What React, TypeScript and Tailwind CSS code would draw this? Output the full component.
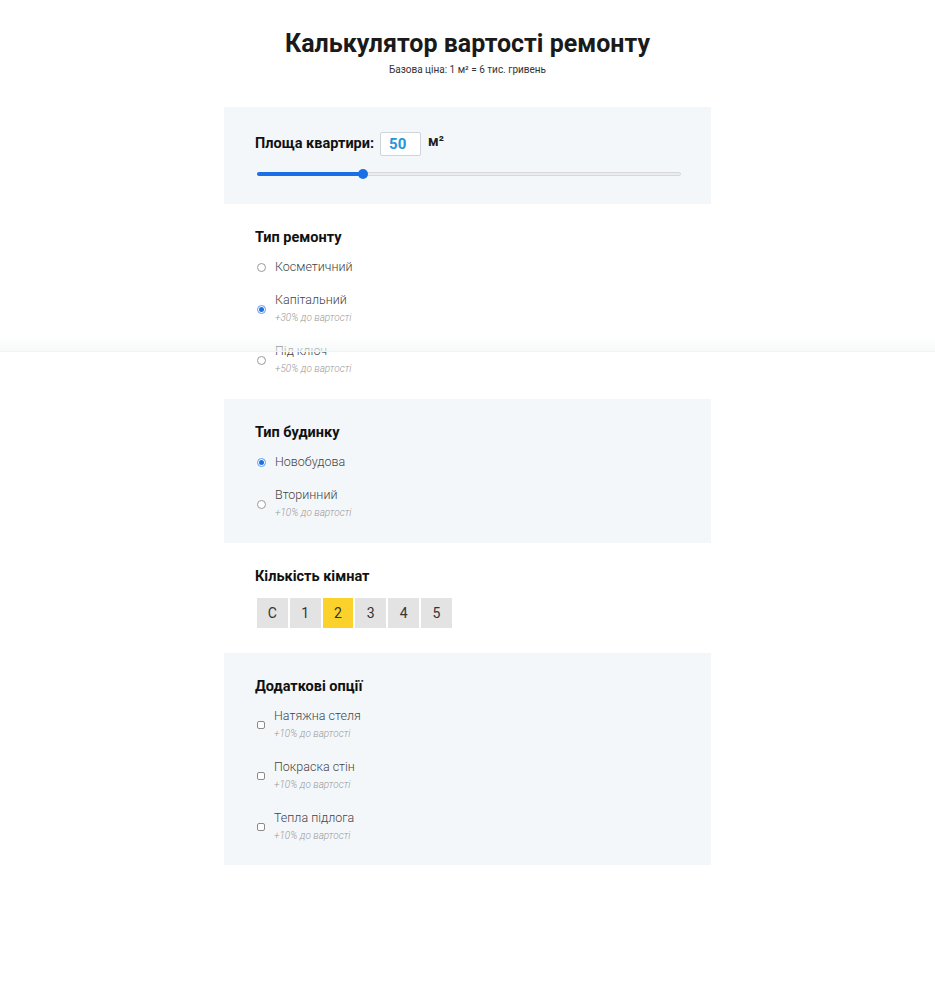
import { useState } from "react";

type Opt = { label: string; note?: string };

const repairTypes: Opt[] = [
  { label: "Косметичний" },
  { label: "Капітальний", note: "+30% до вартості" },
  { label: "Під ключ", note: "+50% до вартості" },
];

const houseTypes: Opt[] = [
  { label: "Новобудова" },
  { label: "Вторинний", note: "+10% до вартості" },
];

const extras: Opt[] = [
  { label: "Натяжна стеля", note: "+10% до вартості" },
  { label: "Покраска стін", note: "+10% до вартості" },
  { label: "Тепла підлога", note: "+10% до вартості" },
];

const rooms = ["С", "1", "2", "3", "4", "5"];

function Radio({ checked }: { checked: boolean }) {
  return checked ? (
    <span className="ml-[2px] flex h-[9px] w-[9px] shrink-0 items-center justify-center rounded-full border border-[#5b9cf0] bg-white">
      <span className="h-[5px] w-[5px] rounded-full bg-[#1f6fe0]" />
    </span>
  ) : (
    <span className="ml-[2px] h-[9px] w-[9px] shrink-0 rounded-full border border-[#9a9a9a] bg-white" />
  );
}

function Check() {
  return <span className="ml-[2px] h-[8px] w-[8px] shrink-0 rounded-[2px] border border-[#8a8a8a] bg-white" />;
}

function OptionRow({ opt, mark, onClick }: { opt: Opt; mark: React.ReactNode; onClick?: () => void }) {
  return (
    <div onClick={onClick} className="flex cursor-pointer items-center gap-[9px]">
      {mark}
      <div>
        <div className="text-[12.5px] font-light leading-[18px] text-[#444]">{opt.label}</div>
        {opt.note && <div className="text-[10px] font-light italic leading-[18px] text-[#999]">{opt.note}</div>}
      </div>
    </div>
  );
}

function Heading({ children }: { children: React.ReactNode }) {
  return <h2 className="text-[14.5px] font-bold leading-[20px] text-[#111]">{children}</h2>;
}

export default function App() {
  const [area] = useState(50);
  const [repair, setRepair] = useState(1);
  const [house, setHouse] = useState(0);
  const [room, setRoom] = useState(2);
  const pct = (area / 200) * 100;

  return (
    <div className="relative min-h-screen bg-white font-['Roboto',sans-serif]">
      <div className="mx-auto w-[487px] pt-[28px]">
        <h1 className="text-center text-[25px] font-bold leading-[32px] text-[#1a1a1a]">
          Калькулятор вартості ремонту
        </h1>
        <p className="mt-[3px] text-center text-[10px] leading-[14px] text-[#333]">
          Базова ціна: 1 м² = 6 тис. гривень
        </p>

        <section className="mt-[30px] bg-[#f4f7fa] px-[31px] pb-[25px] pt-[24px]">
          <div className="flex items-center">
            <span className="text-[14.5px] font-bold text-[#111]">Площа квартири:</span>
            <span className="ml-[6px] flex h-[24px] w-[41px] items-center rounded-[2px] border border-[#cfd4d9] bg-white pl-[8px] text-[15px] font-bold text-[#2196d9]">
              {area}
            </span>
            <span className="mb-[5px] ml-[7px] text-[14px] font-bold text-[#222]">м²</span>
          </div>
          <div className="relative ml-[2px] mt-[12px] flex h-[10px] w-[424px] items-center">
            <div className="h-[4px] w-full rounded-full border border-[#d5d8dc] bg-[#ececec]" />
            <div className="absolute left-0 h-[4px] rounded-full bg-[#1a6fe6]" style={{ width: `${pct}%` }} />
            <div
              className="absolute h-[10px] w-[10px] -translate-x-1/2 rounded-full bg-[#1a6fe6]"
              style={{ left: `${pct}%` }}
            />
          </div>
        </section>

        <section className="bg-white px-[31px] pb-[21px] pt-[24px]">
          <Heading>Тип ремонту</Heading>
          <div className="mt-[10px] flex flex-col gap-[15px]">
            {repairTypes.map((o, i) => (
              <OptionRow key={o.label} opt={o} mark={<Radio checked={repair === i} />} onClick={() => setRepair(i)} />
            ))}
          </div>
        </section>

        <section className="bg-[#f4f7fa] px-[31px] pb-[21px] pt-[24px]">
          <Heading>Тип будинку</Heading>
          <div className="mt-[10px] flex flex-col gap-[15px]">
            {houseTypes.map((o, i) => (
              <OptionRow key={o.label} opt={o} mark={<Radio checked={house === i} />} onClick={() => setHouse(i)} />
            ))}
          </div>
        </section>

        <section className="bg-white px-[31px] pb-[25px] pt-[24px]">
          <Heading>Кількість кімнат</Heading>
          <div className="ml-[2px] mt-[11px] flex gap-[2px]">
            {rooms.map((r, i) => (
              <button
                key={r}
                type="button"
                onClick={() => setRoom(i)}
                className={`flex h-[30px] w-[30.8px] items-center justify-center text-[14px] text-[#333] ${
                  room === i ? "bg-[#fbd22b]" : "bg-[#e3e3e3]"
                }`}
              >
                {r}
              </button>
            ))}
          </div>
        </section>

        <section className="bg-[#f4f7fa] px-[31px] pb-[20px] pt-[24px]">
          <Heading>Додаткові опції</Heading>
          <div className="mt-[10px] flex flex-col gap-[15px]">
            {extras.map((o) => (
              <OptionRow key={o.label} opt={o} mark={<Check />} />
            ))}
          </div>
        </section>
      </div>

      <div className="pointer-events-none absolute left-0 right-0 top-[336px] h-[16px] border-b border-[#f0f5f4] bg-gradient-to-b from-transparent to-[#f3f8f7]/70" />
    </div>
  );
}
